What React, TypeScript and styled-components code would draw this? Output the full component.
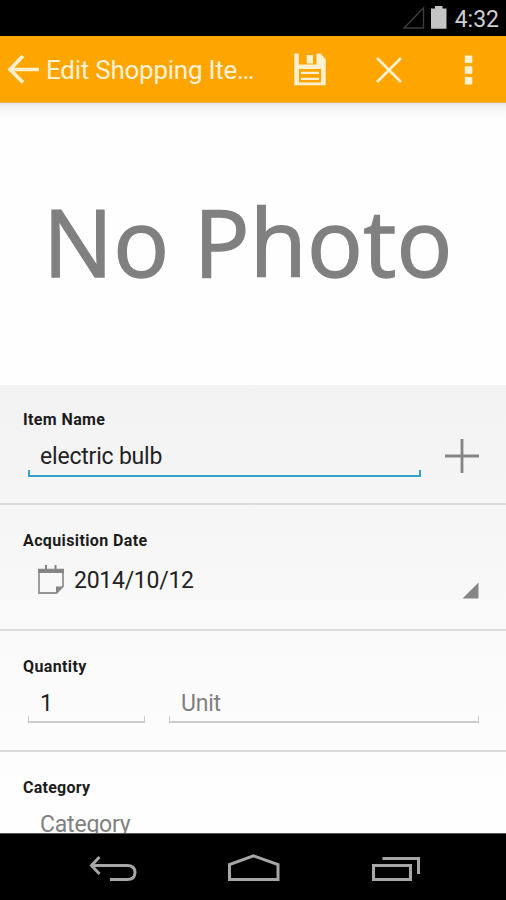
import React from 'react';
import styled, { createGlobalStyle } from 'styled-components';

const GlobalStyle = createGlobalStyle`
  * { box-sizing: border-box; }
  body { margin: 0; background: #000; }
  svg { display: block; flex: none; }
`;

const Screen = styled.div`
  width: 506px;
  height: 900px;
  display: flex;
  flex-direction: column;
  overflow: hidden;
  font-family: Roboto, "Liberation Sans", sans-serif;
  color: #1c1c1c;
  background: #000;
`;

const StatusBar = styled.header`
  flex: none;
  height: 36px;
  display: flex;
  align-items: flex-start;
  justify-content: flex-end;
  padding: 5px 7px 0 0;
`;

const Clock = styled.time`
  margin-left: 7px;
  padding-top: 1px;
  font-size: 23px;
  line-height: 28px;
  color: #cfcfcf;
`;

const ActionBar = styled.div`
  flex: none;
  height: 67px;
  display: flex;
  align-items: center;
  padding-left: 7px;
  background: #ffa500;
  border-bottom: 1px solid #eeb04c;
`;

const Title = styled.h1`
  margin: 0 0 0 6px;
  width: 214px;
  font-size: 26px;
  font-weight: 400;
  line-height: 32px;
  letter-spacing: -0.25px;
  white-space: nowrap;
  color: #fff1d6;
  padding-top: 2px;
`;

const Actions = styled.div`
  flex: 1;
  display: flex;
  align-items: center;
  padding: 1px 0 0 34px;
`;

const ActionButton = styled.button<{ $gap?: number }>`
  padding: 0;
  border: 0;
  background: none;
  margin-left: ${(p) => p.$gap ?? 0}px;
`;

const Photo = styled.section`
  flex: none;
  height: 282px;
  background: linear-gradient(#e4e4e4 0, #f2f2f2 4px, #fafafa 10px, #fefefe 18px);
  padding: 70px 0 0 43px;
  font-family: "Open Sans", "Noto Sans", sans-serif;
  font-size: 93px;
  line-height: 136px;
  letter-spacing: 0.2px;
  color: #808080;
  -webkit-text-stroke: 1.4px #808080;
  white-space: nowrap;
`;

const Form = styled.main`
  flex: none;
  height: 448px;
  overflow: hidden;
  background: linear-gradient(#f2f2f2, #f8f8f8 45%, #fefefe 90%);
`;

const Section = styled.section<{ $height: number; $top?: number }>`
  height: ${(p) => p.$height}px;
  padding: ${(p) => p.$top ?? 26}px 27px 0 23px;
  border-bottom: 2px solid #dcdcdc;
`;

const Label = styled.label<{ $spacing?: number; $below?: number }>`
  display: block;
  font-size: 16px;
  font-weight: 700;
  line-height: 20px;
  letter-spacing: ${(p) => p.$spacing ?? 0.38}px;
  margin-bottom: ${(p) => p.$below ?? 11}px;
`;

const Row = styled.div`
  display: flex;
  align-items: flex-start;
  padding-left: 5px;
`;

const Field = styled.div<{ $width: number; $line: string; $thick?: number; $hint?: boolean; $gap?: number; $top?: number }>`
  flex: none;
  width: ${(p) => p.$width}px;
  height: 35px;
  margin-left: ${(p) => p.$gap ?? 0}px;
  padding: ${(p) => p.$top ?? 2}px 0 0 12px;
  font-size: 23px;
  line-height: 28px;
  letter-spacing: -0.2px;
  white-space: nowrap;
  color: ${(p) => (p.$hint ? '#808080' : '#222')};
  background:
    linear-gradient(${(p) => p.$line}, ${(p) => p.$line}) 0 100% / 100% ${(p) => p.$thick ?? 2}px no-repeat,
    linear-gradient(${(p) => p.$line}, ${(p) => p.$line}) 0 100% / ${(p) => p.$thick ?? 1}px 7px no-repeat,
    linear-gradient(${(p) => p.$line}, ${(p) => p.$line}) 100% 100% / ${(p) => p.$thick ?? 1}px 7px no-repeat;
`;

const AddButton = styled.button`
  margin: -3px 0 0 24px;
  padding: 0;
  border: 0;
  background: none;
`;

const DateRow = styled(Row)`
  padding: 3px 0 0 14px;
`;

const DateValue = styled.span`
  flex: 1;
  margin: 2px 0 0 9px;
  font-size: 23px;
  line-height: 28px;
  letter-spacing: -0.27px;
  color: #222;
`;

const SpinnerMark = styled.svg`
  margin-top: 17px;
`;

const NavBar = styled.nav`
  flex: none;
  height: 67px;
  display: flex;
  align-items: flex-start;
  padding: 20px 0 0 88px;
  background: #000;
  border-top: 1px solid #555;
`;

const NavIcon = styled.svg<{ $gap?: number }>`
  margin-left: ${(p) => p.$gap ?? 0}px;
  fill: none;
  stroke: #a6a6a6;
  stroke-width: 3;
`;

const cream = '#fff1d0';

export default function App() {
  return (
    <Screen>
      <GlobalStyle />
      <StatusBar>
        <svg width="46" height="26" viewBox="0 0 46 26">
          <path d="M2 23 L21.5 3 V23 Z" fill="none" stroke="#3d3d3d" strokeWidth="1.4" />
          <path d="M29 3.5 H33 V1 H40.5 V3.5 H44.5 V23.7 H29 Z" fill="#c4c4c4" />
        </svg>
        <Clock>4:32</Clock>
      </StatusBar>
      <ActionBar>
        <svg width="33" height="32" viewBox="0 0 33 32">
          <path d="M16 3 L3 16.5 L16 29.5 M3 16.5 H32" fill="none" stroke={cream} strokeWidth="3.6" />
        </svg>
        <Title>Edit Shopping Ite…</Title>
        <Actions>
          <ActionButton aria-label="Save">
            <svg width="32" height="33" viewBox="0 0 32 33">
              <path
                fill={cream}
                fillRule="evenodd"
                d="M0.3 0.5 H4.8 V11.5 H22.5 V0.5 H26.5 L31.7 6 V32.3 H0.3 Z M5 16 V29.5 H27 V16 Z"
              />
              <path fill={cream} d="M12.7 2 H19 V10.5 H12.7 Z M7 18.8 H25 V21 H7 Z M7 24.8 H25 V27 H7 Z" />
            </svg>
          </ActionButton>
          <ActionButton $gap={50} aria-label="Cancel">
            <svg width="26" height="26" viewBox="0 0 26 26">
              <path d="M1 1 L25 25 M25 1 L1 25" stroke={cream} strokeWidth="2.6" />
            </svg>
          </ActionButton>
          <ActionButton $gap={62} aria-label="More">
            <svg width="9" height="30" viewBox="0 0 9 30">
              <path fill={cream} d="M0.8 0.5 H8.3 V8 H0.8 Z M0.8 11.2 H8.3 V18.7 H0.8 Z M0.8 22 H8.3 V29.5 H0.8 Z" />
            </svg>
          </ActionButton>
        </Actions>
      </ActionBar>
      <Photo>No Photo</Photo>
      <Form>
        <Section $height={120} $top={25}>
          <Label $below={12}>Item Name</Label>
          <Row>
            <Field $width={393} $line="#33a3cb" $thick={2} $top={1}>electric bulb</Field>
            <AddButton aria-label="Add">
              <svg width="34" height="34" viewBox="0 0 34 34">
                <path d="M0 17 H34 M17 0 V34" stroke="#858585" strokeWidth="2.8" />
              </svg>
            </AddButton>
          </Row>
        </Section>
        <Section $height={126}>
          <Label>Acquisition Date</Label>
          <DateRow>
            <svg width="28" height="32" viewBox="0 0 28 32">
              <path d="M2 8 V28 H19.5 L26 21.5 V8" fill="none" stroke="#939393" strokeWidth="1.8" />
              <path d="M1 3.8 H27 V8 H1 Z M8 0 H10 V4 H8 Z M17.5 0 H19.5 V4 H17.5 Z M19 28 V21.5 H26 Z" fill="#858585" />
            </svg>
            <DateValue>2014/10/12</DateValue>
            <SpinnerMark width="17" height="17" viewBox="0 0 17 17">
              <path d="M0.5 16.5 L16.5 0.5 V16.5 Z" fill="#868686" />
            </SpinnerMark>
          </DateRow>
        </Section>
        <Section $height={121}>
          <Label>Quantity</Label>
          <Row>
            <Field $width={117} $line="#cbcbcb">1</Field>
            <Field $width={310} $gap={24} $line="#cbcbcb" $hint>Unit</Field>
          </Row>
        </Section>
        <Section $height={121}>
          <Label $spacing={0.25}>Category</Label>
          <Row>
            <Field $width={450} $line="#cbcbcb" $hint>Category</Field>
          </Row>
        </Section>
      </Form>
      <NavBar>
        <NavIcon width="49" height="30" viewBox="0 0 49 30">
          <path d="M11.5 3 L3.5 11.5 L11.5 20 M3.5 11.5 H39 Q47 11.5 47 18.5 Q47 25.5 39 25.5 H22" />
        </NavIcon>
        <NavIcon $gap={90} width="54" height="30" viewBox="0 0 54 30">
          <path d="M2.5 25.5 V10.5 L26.5 1.8 L51 10.5 V25.5 Z" />
        </NavIcon>
        <NavIcon $gap={90} width="51" height="30" viewBox="0 0 51 30">
          <path d="M2.5 11.5 H39.5 V25.5 H2.5 Z M11.5 4.5 H47.5 V20" />
        </NavIcon>
      </NavBar>
    </Screen>
  );
}
